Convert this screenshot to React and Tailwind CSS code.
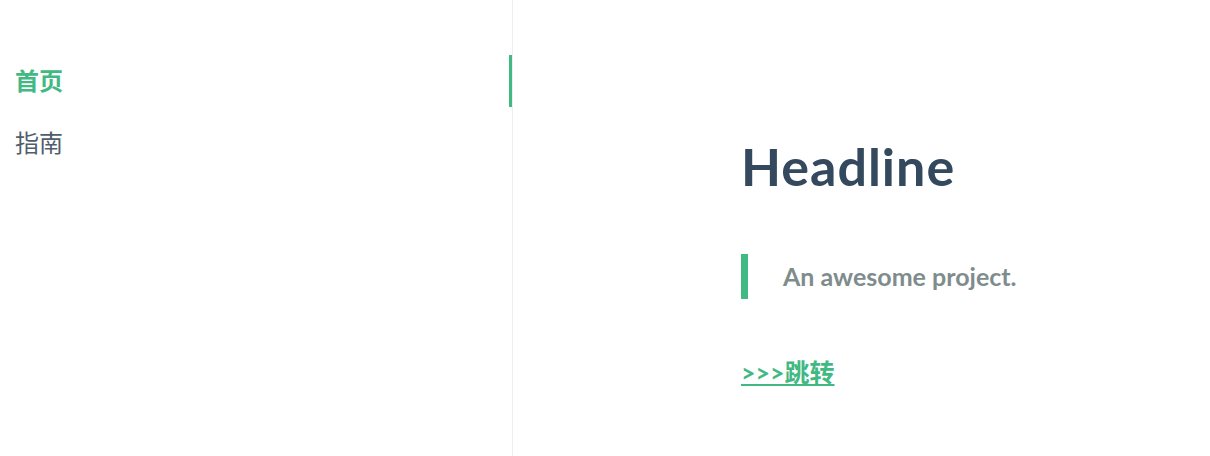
export default function App() {
  const menu = [
    { label: "首页", active: true },
    { label: "指南", active: false },
  ];

  return (
    <div className="flex h-[456px] w-[1210px] bg-white font-['Lato','Noto_Sans_CJK_SC',sans-serif]">
      <aside className="w-[513px] shrink-0 border-r border-[#eee] pt-[55px]">
        <ul className="flex flex-col gap-[10px]">
          {menu.map((item) => (
            <li
              key={item.label}
              className={
                item.active
                  ? "flex h-[52px] items-center border-r-[3px] border-[#42b983] pl-[15px] text-[24px] font-bold text-[#42b983]"
                  : "flex h-[52px] items-center pl-[15px] text-[24px] text-[#505d6b]"
              }
            >
              {item.label}
            </li>
          ))}
        </ul>
      </aside>

      <main className="flex-1 pl-[228px] pt-[134px]">
        <h1 className="text-[52px] font-bold leading-[64px] tracking-[1px] text-[#34495e]">Headline</h1>
        <blockquote className="mt-[56px] flex h-[45px] items-center border-l-[7px] border-[#42b983] pl-[35px]">
          <p className="text-[25px] font-bold text-[#7f8c8d]">An awesome project.</p>
        </blockquote>
        <a href="#" className="mt-[58px] inline-block text-[25px] font-bold leading-[30px] text-[#42b983] underline">
          &gt;&gt;&gt;跳转
        </a>
      </main>
    </div>
  );
}
